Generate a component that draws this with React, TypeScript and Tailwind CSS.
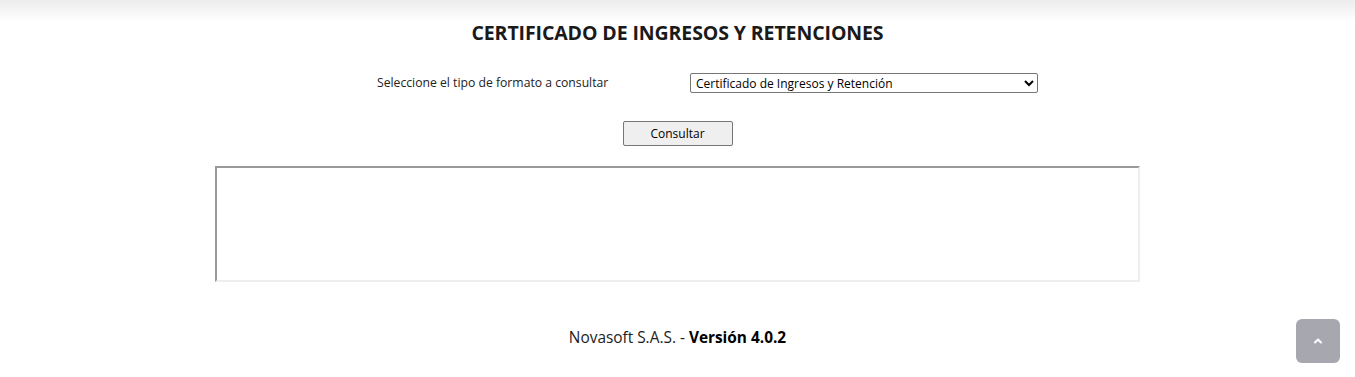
import { ChevronUp } from "lucide-react";

function App() {
  return (
    <div className="relative min-h-[377px] bg-white font-['Open_Sans',sans-serif] text-[#212529]">
      {/* header shadow */}
      <div className="h-[22px] bg-gradient-to-b from-[#ececec] to-white" />

      <h1 className="text-center text-[19.5px] font-bold leading-[22px] tracking-[-0.1px] text-[#1a1a1a]">
        CERTIFICADO DE INGRESOS Y RETENCIONES
      </h1>

      <div className="mx-auto mt-[29px] w-[925px]">
        <div className="flex items-center">
          <label className="ml-[162px] w-[313px] text-[12.2px] text-[#222]">
            Seleccione el tipo de formato a consultar
          </label>
          <select
            className="h-[20px] w-[348px] rounded-[2px] border border-[#767676] bg-white pl-[1px] text-[12px] text-black"
            defaultValue="cir"
          >
            <option value="cir">Certificado de Ingresos y Retención</option>
          </select>
        </div>

        <div className="mt-[28px] flex justify-center">
          <button className="h-[25px] w-[110px] rounded-[2px] border border-[#767676] bg-[#efefef] text-[12px] text-black">
            Consultar
          </button>
        </div>

        <div className="mt-[20px] h-[116px] w-[925px] border-2 border-t-[#999] border-l-[#999] border-b-[#eee] border-r-[#eee] bg-white" />
      </div>

      <footer className="mt-[44px] text-center text-[15.4px] text-[#222]">
        Novasoft S.A.S. - <span className="font-bold text-black">Versión 4.0.2</span>
      </footer>

      <button className="absolute right-[15px] top-[319px] flex h-[44px] w-[44px] items-center justify-center rounded-[6px] bg-[#a7a7b0] text-white">
        <ChevronUp size={12} strokeWidth={4} />
      </button>
    </div>
  );
}

export default App;
